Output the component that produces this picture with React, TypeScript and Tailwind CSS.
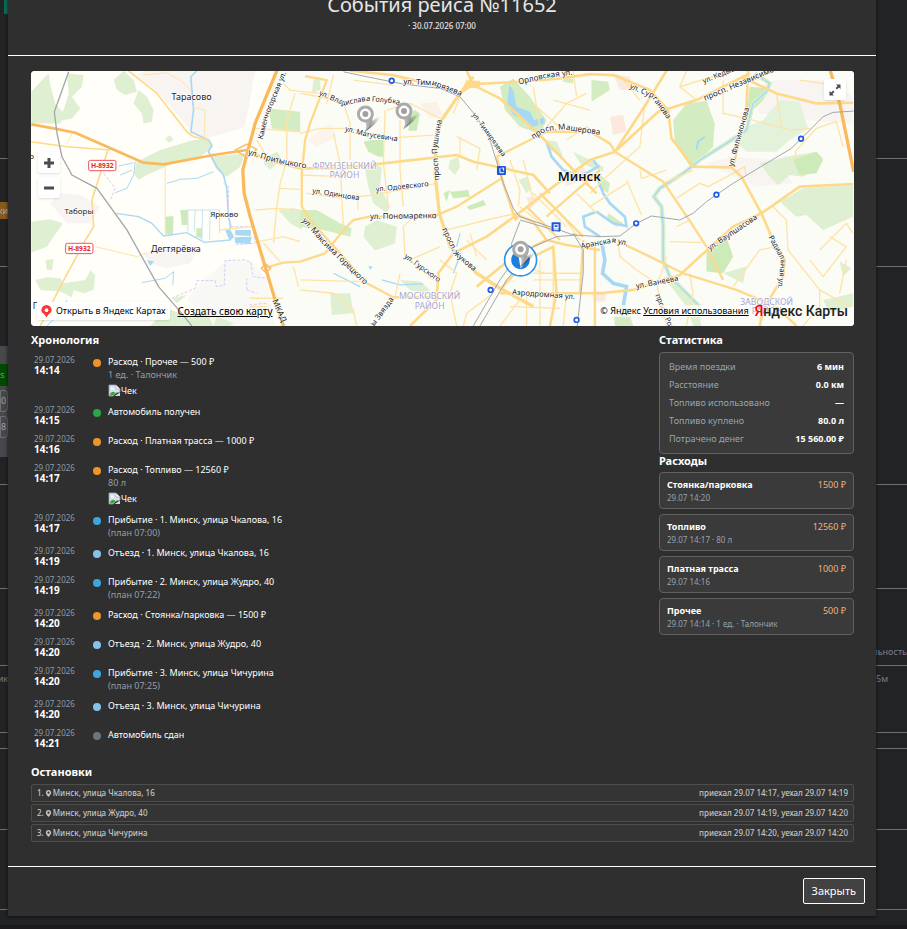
import { FaMapMarkerAlt } from "react-icons/fa";

type Kind = "expense" | "start" | "arrive" | "depart" | "end";

const DOTS: Record<Kind, string> = {
  expense: "bg-[#f0932b]",
  start: "bg-[#28a745]",
  arrive: "bg-[#3ea6dc]",
  depart: "bg-[#85c1e9]",
  end: "bg-[#6c757d]",
};

const EVENTS: { time: string; kind: Kind; text: string; sub?: string; receipt?: boolean }[] = [
  { time: "14:14", kind: "expense", text: "Расход · Прочее — 500 ₽", sub: "1 ед. · Талончик", receipt: true },
  { time: "14:15", kind: "start", text: "Автомобиль получен" },
  { time: "14:16", kind: "expense", text: "Расход · Платная трасса — 1000 ₽" },
  { time: "14:17", kind: "expense", text: "Расход · Топливо — 12560 ₽", sub: "80 л", receipt: true },
  { time: "14:17", kind: "arrive", text: "Прибытие · 1. Минск, улица Чкалова, 16", sub: "(план 07:00)" },
  { time: "14:19", kind: "depart", text: "Отъезд · 1. Минск, улица Чкалова, 16" },
  { time: "14:19", kind: "arrive", text: "Прибытие · 2. Минск, улица Жудро, 40", sub: "(план 07:22)" },
  { time: "14:20", kind: "expense", text: "Расход · Стоянка/парковка — 1500 ₽" },
  { time: "14:20", kind: "depart", text: "Отъезд · 2. Минск, улица Жудро, 40" },
  { time: "14:20", kind: "arrive", text: "Прибытие · 3. Минск, улица Чичурина", sub: "(план 07:25)" },
  { time: "14:20", kind: "depart", text: "Отъезд · 3. Минск, улица Чичурина" },
  { time: "14:21", kind: "end", text: "Автомобиль сдан" },
];

const STATS = [
  ["Время поездки", "6 мин"],
  ["Расстояние", "0.0 км"],
  ["Топливо использовано", "—"],
  ["Топливо куплено", "80.0 л"],
  ["Потрачено денег", "15 560.00 ₽"],
];

const EXPENSES = [
  { name: "Стоянка/парковка", sum: "1500 ₽", note: "29.07 14:20" },
  { name: "Топливо", sum: "12560 ₽", note: "29.07 14:17 · 80 л" },
  { name: "Платная трасса", sum: "1000 ₽", note: "29.07 14:16" },
  { name: "Прочее", sum: "500 ₽", note: "29.07 14:14 · 1 ед. · Талончик" },
];

const STOPS = [
  { address: "Минск, улица Чкалова, 16", visit: "приехал 29.07 14:17, уехал 29.07 14:19" },
  { address: "Минск, улица Жудро, 40", visit: "приехал 29.07 14:19, уехал 29.07 14:20" },
  { address: "Минск, улица Чичурина", visit: "приехал 29.07 14:20, уехал 29.07 14:20" },
];

// street names that follow the roads: text, path, size
const STREETS: [string, string, number][] = [
  ["Каменногорская ул.", "M788 238L802 175L850 58L870 10", 22],
  ["ул. Притыцкого", "M743 283L820 306L960 334", 24],
  ["МКАД", "M816 722L870 850", 25],
  ["ул. Владислава Голубка", "M956 104L1030 136L1100 122L1180 130L1260 150", 22],
  ["ул. Тимирязева", "M1210 72L1300 76L1420 122", 24],
  ["ул. Матусевича", "M1034 212L1100 230L1230 250", 22],
  ["просп. Пушкина", "M1318 360L1311 260L1335 130", 23],
  ["ул. Тимирязева", "M1416 164L1460 225L1550 350", 21],
  ["Орловская ул.", "M1557 73L1640 54L1780 36", 24],
  ["просп. Машерова", "M1601 238L1635 215L1690 208L1850 232", 24],
  ["ул. Одоевского", "M1128 395L1320 375", 22],
  ["ул. Одинцова", "M936 399L1120 428", 22],
  ["ул. Пономаренко", "M1110 477L1350 474", 24],
  ["просп. Жукова", "M1326 508L1362 585L1470 675", 23],
  ["ул. Максима Горецкого", "M906 482L970 555L1140 720", 24],
  ["ул. Гурского", "M1212 592L1360 700", 22],
  ["Аэродромная ул.", "M1536 704L1780 722", 23],
  ["ы Звязда", "M1122 800L1210 680", 23],
  ["Аранская ул.", "M1744 566L1840 548L1940 570", 23],
  ["ул. Сурганова", "M1888 84L1955 112L2008 185L2030 240", 23],
  ["ул. Кедышко", "M2112 70L2260 10", 22],
  ["просп. Независимости", "M2116 122L2380 10", 24],
  ["ул. Филимонова", "M2200 320L2224 230L2262 100", 23],
  ["ул. Ваупшасова", "M2130 572L2320 444", 23],
  ["Радиальная ул.", "M2306 532L2344 600L2330 720", 22],
  ["ул. Ванеева", "M1910 686L2100 650", 23],
  ["просп. Рокоссовского", "M1966 706L2030 860", 22],
];

const PLACES: [string, number, number, number, string][] = [
  ["Тарасово", 574, 120, 27, "#222222"],
  ["Таборы", 236, 462, 24, "#222222"],
  ["Ярково", 672, 471, 24, "#222222"],
  ["Дегтярёвка", 527, 575, 27, "#222222"],
  ["о", 94, 297, 24, "#222222"],
  ["Г", 104, 747, 26, "#222222"],
  ["ФРУНЗЕНСКИЙ", 1033, 326, 26, "#a7a3cb"],
  ["РАЙОН", 1033, 354, 26, "#a7a3cb"],
  ["МОСКОВСКИЙ", 1289, 718, 26, "#a7a3cb"],
  ["РАЙОН", 1289, 746, 26, "#a7a3cb"],
  ["ЗАВОДСКОЙ", 2301, 735, 26, "#a7a3cb"],
  ["РАЙОН", 2301, 763, 26, "#a7a3cb"],
];

const STATIONS = [
  [1175, 62], [1472, 690], [1730, 780], [1909, 490], [2150, 404], [2404, 236],
];

const PINS = [
  [1096, 162], [1212, 153], [1562, 568],
];

function MapDrawing() {
  return (
    <svg
      className="block h-full w-full font-['Noto_Sans','Open_Sans',sans-serif]"
      viewBox="92 32 2471 767"
      preserveAspectRatio="xMidYMid slice"
      role="img"
      aria-label="Карта"
    >
      <defs>
        <linearGradient id="pin-shadow" x1="0" y1="1" x2="1" y2="0">
          <stop offset="0" stopColor="#222222" stopOpacity=".75" />
          <stop offset="1" stopColor="#222222" stopOpacity="0" />
        </linearGradient>
        <linearGradient id="pin-tail" x1="0" y1="0" x2="1" y2="0">
          <stop offset="0" stopColor="#c4c4c4" />
          <stop offset="1" stopColor="#9a9a9a" />
        </linearGradient>
        {STREETS.map(([, d], i) => (
          <path key={i} id={`street-${i}`} d={d} />
        ))}
      </defs>

      <rect x="0" y="0" width="2700" height="850" fill="#fffef8" />
      <path d="M830 32H2570V799H850L795 620L730 400L745 265Z" fill="#fcfcf6" />
      {/* built-up areas */}
      <g fill="#f8f4f1">
        <path d="M430 32H765L735 200L620 235L575 215L480 105L410 45Z" />
        <path d="M150 430L180 400L240 405L300 440L270 490L200 490Z" />
        <path d="M430 580L520 555L590 570L570 610L500 625L450 610Z" />
        <path d="M590 680L675 605L755 605L800 660L825 798H640L560 720Z" fill="#f8f8f5" />
        <path d="M2240 90L2330 60L2490 60L2560 110V190L2420 180L2280 160Z" />
        <path d="M2120 310L2200 290L2330 300L2380 370L2270 380Z" />
      </g>
      <g fill="#fbe9e0">
        <path d="M1690 345L1750 320L1770 350L1700 378Z" />
        <path d="M1580 410L1622 415L1590 448Z" />
        <path d="M1260 130L1310 125L1330 165L1290 175Z" opacity=".6" />
        <path d="M920 240L990 190L1010 230L950 260Z" opacity=".5" />
        <path d="M1830 170L1870 165L1880 215L1840 225Z" />
        <path d="M1840 40L1890 50L1900 90L1860 90Z" />
        <path d="M1780 690L1820 700L1815 725H1780Z" />
      </g>
      {/* parks and forest */}
      <g fill="#dff0d2">
        <path d="M93 95L125 60L145 40L150 75L165 130L190 160L180 190H93Z" />
        <path d="M200 40L250 45L245 80L215 110L240 145L215 175L165 185L190 150L205 100Z" />
        <path d="M340 60L370 32L400 60L410 95L375 105L350 90Z" />
        <path d="M415 90L440 110L460 150L455 185L430 190L425 160L400 130Z" />
        <path d="M495 235L510 225L520 240L505 247Z" />
        <path d="M410 305L480 270L580 240L625 235L640 260L600 290L520 310L440 345L415 360L400 340Z" />
        <path d="M630 290L680 285L735 280L720 320L680 350L650 330Z" />
        <path d="M93 485L150 478L188 490L160 530L140 560L93 578Z" />
        <path d="M135 600L160 598L155 630L140 630Z" />
        <path d="M105 660L140 652L180 655L190 670L255 660L270 632L285 645L280 690L250 700L220 690L215 712L180 695L120 690Z" />
        <path d="M495 470L520 468L518 525L495 523ZM540 450H562V495H545ZM588 505H605V535L588 530Z" fill="#cfe9bd" />
        <path d="M500 745L560 770L620 755L640 798H450ZM515 715L560 705L530 730ZM650 770L700 790L690 798H640Z" />
        <path d="M805 145L900 155V215L815 205Z" fill="#d3ecc2" />
        <path d="M800 290L830 275L845 295L810 330L790 310ZM835 450L880 445L905 455V510L870 490Z" />
        <path d="M940 60L960 50L962 90L935 100Z" />
        <path d="M1090 245L1115 240H1150V290L1135 290L1105 275Z" fill="#cdeab9" />
        <path d="M1105 310L1145 320L1140 380L1170 440L1160 460L1120 430L1105 380L1095 330Z" />
        <path d="M1230 160L1245 150L1260 160L1250 212H1225Z" fill="#cdeab9" />
        <path d="M900 450L950 450L1020 490L1055 505L1050 530L970 510L900 500Z" fill="#d3ecc2" />
        <path d="M1095 500L1130 480L1190 500L1185 550L1125 572L1090 530Z" />
        <path d="M1330 400L1350 390L1340 425ZM1350 395L1405 390L1410 410L1360 415ZM1400 440L1450 420L1458 435L1410 450Z" fill="#cdeab9" />
        <path d="M1350 300L1375 290L1380 320L1365 345L1345 325ZM1555 360L1580 350L1595 385L1580 400Z" />
        <path d="M1500 80L1540 55L1590 110L1640 180L1620 222L1560 200L1515 150Z" fill="#d3ecc2" />
        <path d="M1640 240L1670 245L1690 290L1650 270ZM1720 275L1770 300L1810 320V335L1740 310Z" />
        <path d="M1690 55H1720V70L1690 65ZM1775 60L1825 65L1830 90L1775 125Z" fill="#d3ecc2" />
        <path d="M1200 660L1260 665L1290 690L1270 700L1230 690ZM990 700L1050 700L1060 760L995 765Z" />
        <path d="M2020 180L2060 130L2120 122L2145 190L2140 260L2090 310L2070 318L2025 250Z" fill="#d3ecc2" />
        <path d="M2240 200L2290 180L2340 120L2400 125L2425 205L2370 240L2330 275L2240 275L2215 250Z" fill="#e3f2da" />
        <path d="M2250 80L2310 85L2290 120L2260 150L2250 190L2240 180Z" fill="#cdeab9" />
        <path d="M2280 310L2360 290L2450 275L2470 295L2450 330L2410 350L2370 345L2335 375L2310 350Z" />
        <path d="M2380 300L2450 275L2470 300L2450 340L2400 345Z" fill="#cdeab9" />
        <path d="M2340 425L2410 385L2560 375V470L2470 510L2420 465L2390 470Z" />
        <path d="M2120 560L2180 530L2200 590L2170 640L2120 635Z" fill="#cdeab9" />
        <path d="M2170 640L2240 620L2230 670ZM2520 605L2555 625L2530 650ZM2470 720L2560 700V740L2490 760Z" />
        <path d="M1825 460L1870 490L1850 500L1820 480ZM1795 340L1830 370L1825 400L1795 380ZM1840 740L1880 735L1900 798H1845Z" fill="#d3ecc2" />
        <path d="M1990 650L2030 660L2090 730L2105 798H2080L2060 740Z" />
      </g>
      {/* water */}
      <path
        d="M2265 40L2310 70L2300 95L2260 130L2240 210L2180 250L2100 300L2050 340L1980 385L1962 410L1985 440L1990 500V600L2010 650L2100 740"
        fill="none" stroke="#d9efcc" strokeWidth="13"
      />
      <g fill="none" stroke="#a8d9f4" strokeWidth="4">
        <path d="M590 32L572 50L580 150L572 215L625 240L635 255L625 275L650 320L670 345L680 385L685 470L692 500L680 515L690 540" strokeWidth="5" />
        <path d="M348 460L415 470L455 490L490 528L560 518L612 547L690 540" strokeWidth="4" />
        <path d="M500 370L540 358L590 355L640 335M405 305L400 345L380 385L345 398M355 318L400 308M360 345L395 330M425 668L495 655L520 635L518 675M200 720L180 760L140 798" strokeWidth="3" />
        <path d="M563 450H658V520M563 450V515M585 450L582 515M607 450L605 540M630 450L628 540" strokeWidth="2" />
        <path d="M2265 40L2310 70L2300 95L2260 130L2240 210L2180 250L2100 300L2050 340L1980 385L1962 410L1985 440L1990 500V600L2010 650L2100 740" strokeWidth="4" />
        <path d="M2090 270L2095 245L2115 230" strokeWidth="6" />
        <path d="M1640 245L1655 290L1690 330L1740 350L1795 320L1780 300M1790 455L1750 470L1755 500L1800 530M1790 455L1840 490L1880 498L1875 470L1830 430L1810 400L1790 345" strokeWidth="8" />
        <path d="M1805 545L1815 600L1808 640L1840 670L1880 680L1870 740" strokeWidth="11" />
        <path d="M1375 600L1360 640M1145 660L1200 675L1270 672M1380 520L1370 560M1000 640L1080 680" />
      </g>
      <g fill="#a8d9f4">
        <path d="M705 510H752V528L705 526ZM703 532L755 530L750 552L705 550ZM675 510L690 508L702 530L690 542Z" />
        <path d="M1528 75L1540 90L1550 140L1590 155L1602 180L1632 172L1635 190L1590 202L1570 180L1540 165L1522 130Z" />
        <path d="M440 600L462 605L450 618ZM1105 618L1118 620L1110 630Z" />
      </g>
      {/* district limits */}
      <path
        d="M310 340L345 385L330 420M515 715L585 685L590 662H645L648 680L672 676L675 602L735 600L752 608L758 650L800 655M740 690L770 700M740 690V655M670 370L685 380V470L690 500H760L765 550L700 555M748 735L800 730"
        fill="none" stroke="#d8cdf2" strokeWidth="3" strokeDasharray="9 5"
      />
      {/* side streets */}
      <g fill="none" stroke="#ffe3a6" strokeWidth="4">
        <path d="M430 45L500 38L540 60L572 90M575 140L615 150L612 235M215 220L200 250M495 315V525M285 560L410 590L440 578" strokeWidth="3" />
        <path d="M760 205L900 215M850 70L870 90L1000 105M885 100L860 180V300L840 370L830 440L820 550M835 385L900 388M765 450L830 445L900 450M775 545L850 530L900 545M790 550L840 605M880 620L895 680M748 715H850M748 740H800M770 240L800 290M660 510L755 500" />
        <path d="M900 100L960 110L1030 130L1050 190V300M900 220L960 205L1050 205L1150 235L1300 225M1200 180V330L1210 440M1155 150L1150 310L1165 440M1160 150L1230 130L1310 170L1330 180M1000 220L1020 310L1030 500M1070 400L1075 450M920 400L1030 415L1120 405L1310 370M900 345L1030 350M1240 470L1210 500L1215 590L1300 660" />
        <path d="M1340 510L1380 500L1460 480L1550 460M1230 600L1320 560M1370 230L1440 265L1430 330M1380 285V230M1530 300L1560 390L1555 440M900 660L1090 665M1185 710L1200 640M900 690L1000 700L1060 750L1070 798M1320 600L1370 640L1350 700L1370 798M1600 80L1620 200M1660 120L1770 150M1720 32L1730 110" />
        <path d="M1360 160L1400 60M1000 45L980 130M1060 60L1180 75M1560 620L1640 640M1580 700V798M1620 600V798M1660 570V760M1700 700L1690 798M1530 740L1680 745M1500 798L1560 720M1600 660H1740M1600 640L1750 640M1410 520L1430 590M1460 600L1400 540M1480 700L1400 760L1390 798" />
        <path d="M1870 60L1920 120M2060 32L2040 80L2090 120M2040 80L2170 40M2170 60V160L2240 175L2370 210L2430 205M2030 415L2100 370L2125 380L2200 340L2235 320L2238 350M1990 370L2080 330M2030 500L2070 480M1920 330L1925 355L2000 330M1880 360L1925 465M1770 440L1880 370M1770 400L1820 350L1920 260L1935 130" />
        <path d="M1855 545L1860 590L1910 630L1970 670L2000 798M1970 670L1985 640L2000 590M2010 545L2105 548M2200 680L2280 570L2330 560M2320 440L2360 480L2365 570L2460 690L2550 740M2460 570L2540 490L2560 520M2430 600L2470 650L2540 560L2490 530M2380 310L2390 270L2450 205L2510 185L2530 260M2330 100L2345 200M2070 640L2080 700L2060 798M2460 690V740L2410 798M2540 600L2520 700M2400 60L2540 80" />
        <path d="M1600 130L1700 220M1640 200L1700 130L1760 100M1570 300L1600 420M1700 240L1760 200L1840 260M1690 470L1740 540M1600 400L1700 500M1560 440L1660 520M1730 400L1790 460" />
      </g>
      {/* main streets */}
      <g fill="none" stroke="#ffd98a" strokeWidth="8" strokeLinejoin="round">
        <path d="M385 32L470 100L560 215L580 230L625 240M93 245L200 260L330 270M322 272L275 420L280 500L250 550L180 680L140 760L120 798" strokeWidth="5" />
        <path d="M745 275L820 305L900 325L1030 325L1150 310L1370 285L1420 305L1490 320L1600 345L1650 400" />
        <path d="M800 622L850 608L900 605L975 580L1030 510L1060 480L1110 470H1300L1370 440L1505 355" strokeWidth="7" />
        <path d="M915 48L980 60L930 190L915 240L905 340V440L930 480L1100 670L1180 712H1300" strokeWidth="7" />
        <path d="M1420 50L1380 100L1325 180L1308 230L1305 340L1318 460L1350 560L1430 640L1500 685L1600 740" strokeWidth="10" />
        <path d="M1050 32L1180 45L1300 75L1380 100L1420 72L1560 65L1680 55L1770 42L1840 45L1950 90L2005 150L2015 235L2080 320L2195 322L2225 350L2285 460L2315 530L2355 600L2350 650L2290 750L2280 798" />
        <path d="M1400 32L1420 75L1500 115L1620 225L1730 340L1790 400" />
        <path d="M1490 290L1590 240L1640 215L1700 215L1770 215L1830 250L1845 275L1990 365L2075 490L2120 560L2170 660" strokeWidth="7" />
        <path d="M1230 798L1310 720L1315 640L1360 580L1460 530L1550 465L1660 380L1770 300L1845 275L1975 155L2090 120L2250 40M2000 32L1940 130L1845 275" />
        <path d="M1490 290L1510 370L1540 460L1600 485L1640 540L1700 555L1800 570M1430 680L1540 590L1640 540M1500 690L1580 600L1660 560L1670 700L1650 798M1500 700H1800L1900 690L2040 645L2100 590L2200 500L2285 460L2400 380L2560 372" />
        <path d="M1785 560V798M1750 540L1740 700M1580 440L1680 540M1620 400L1750 530M1640 470L1800 330M1855 545L1950 590L2050 640L2210 690L2330 740L2390 798" strokeWidth="7" />
        <path d="M2225 50L2330 100L2450 130L2560 128M2245 32L2240 150L2200 320" />
      </g>
      <path d="M1400 62H1440V84H1400ZM1532 450L1560 470L1545 485Z" fill="#ffd98a" />
      {/* ring road */}
      <g fill="none" stroke="#fab95c" strokeWidth="10" strokeLinejoin="round">
        <path d="M93 193L160 205L225 218L430 308L490 313L640 285L740 270" strokeWidth="8" />
        <path d="M830 32L765 190L745 265L728 330L732 400L750 470L795 620L825 720L850 798" />
        <path d="M2492 32L2520 130L2562 335" />
        <path d="M705 270L740 252L770 268L740 292ZM783 625L797 612L812 625L797 638Z" strokeWidth="4" />
      </g>
      {/* railways */}
      <g fill="none" stroke="#a4a6ad" strokeWidth="3">
        <path d="M205 35L162 155L170 220L185 290L215 345L290 385L380 510L475 680L540 755L575 798" strokeWidth="4" />
        <path d="M1030 35L1100 50L1210 72L1320 85L1380 110L1430 170L1470 240L1510 370L1540 445L1560 470L1650 500L1720 525L1800 530L1860 528L1910 490L1955 468L2040 480L2080 460L2120 425L2200 370L2375 265L2470 170L2500 157L2562 153" />
        <path d="M1560 485L1535 550L1540 600M1720 520L1750 570V640L1732 798M1550 590L1500 660L1420 798M1580 590L1520 660L1440 798M1730 525L1670 530L1600 560L1550 600M1560 480L1680 515" />
      </g>

      <g fill="#222222" stroke="#ffffff" strokeWidth="4" strokeLinejoin="round" paintOrder="stroke">
        {STREETS.map(([name, , size], i) => (
          <text key={i} fontSize={size}>
            <textPath href={`#street-${i}`}>{name}</textPath>
          </text>
        ))}
        {PLACES.map(([name, x, y, size, fill], i) => (
          <text key={i} x={x} y={y} fontSize={size} fill={fill} textAnchor="middle">
            {name}
          </text>
        ))}
        <text x="1738" y="364" fontSize="39" fontWeight="600" fill="#111111" textAnchor="middle">
          Минск
        </text>
      </g>

      {[[265, 301], [196, 550]].map(([x, y]) => (
        <g key={x}>
          <rect x={x} y={y} width="82" height="31" rx="5" fill="#ffffff" stroke="#f0525f" strokeWidth="3" />
          <text x={x + 41} y={y + 23} fontSize="20" fontWeight="700" fill="#e31e2e" textAnchor="middle">
            Н-8932
          </text>
        </g>
      ))}

      {STATIONS.map(([x, y]) => (
        <circle key={x} cx={x} cy={y} r="7" fill="#ffffff" stroke="#1f5ae8" strokeWidth="5" />
      ))}
      <g>
        <rect x="1491" y="318" width="27" height="27" rx="3" fill="#1f56d8" />
        <path d="M1500 324V338H1512M1505 324H1511V332" fill="none" stroke="#ffffff" strokeWidth="3" />
        <rect x="1655" y="487" width="27" height="27" rx="3" fill="#1f56d8" />
        <path d="M1661 493H1676V506H1661ZM1661 508H1676V511H1661Z" fill="#ffffff" />
        <rect x="1664" y="496" width="9" height="5" fill="#1f56d8" />
      </g>

      <circle cx="1562" cy="600" r="48" fill="#ffffff" stroke="#2f93e6" strokeWidth="5" />
      <path d="M1540 582A28 28 0 1 0 1588 590L1562 626L1556 590Z" fill="#1d7fdc" />
      {PINS.map(([x, y]) => (
        <g key={x}>
          <path d={`M${x - 2} ${y + 54}L${x + 14} ${y + 24}L${x + 44} ${y + 6}Q${x + 38} ${y + 28} ${x - 2} ${y + 54}Z`} fill="url(#pin-shadow)" />
          <path
            d={`M${x - 4} ${y + 56}Q${x + 8} ${y + 40} ${x} ${y + 22}L${x + 22} ${y + 10}Q${x + 20} ${y + 32} ${x - 4} ${y + 56}Z`}
            fill="url(#pin-tail)"
          />
          <circle cx={x} cy={y} r="21" fill="#ffffff" stroke="#ababab" strokeWidth="9" />
          <circle cx={x} cy={y} r="9" fill="#a0a0a0" />
        </g>
      ))}
    </svg>
  );
}

function TripMap() {
  return (
    <div className="relative h-[255px] overflow-hidden rounded-[4px] bg-[#fffef8] font-['Noto_Sans','Open_Sans',sans-serif] text-black">
      <MapDrawing />
      <div className="absolute left-[7px] top-[81px] flex flex-col gap-1">
        <button type="button" aria-label="Приблизить" className="flex h-[21px] w-[22px] items-center justify-center rounded-[2px] bg-white shadow">
          <svg viewBox="0 0 12 12" className="size-3">
            <path d="M6 1v10M1 6h10" stroke="#4d4d4d" strokeWidth="3" />
          </svg>
        </button>
        <button type="button" aria-label="Отдалить" className="flex h-[21px] w-[22px] items-center justify-center rounded-[2px] bg-white shadow">
          <svg viewBox="0 0 12 12" className="size-3">
            <path d="M1 6h10" stroke="#4d4d4d" strokeWidth="3" />
          </svg>
        </button>
      </div>
      <button type="button" aria-label="На весь экран" className="absolute right-2 top-2 flex h-[21px] w-[22px] items-center justify-center rounded-[2px] bg-white shadow">
        <svg viewBox="0 0 12 12" className="size-3" fill="#4d4d4d">
          <path d="M7 .5h4.500V5L9.900 3.400 7.900 5.400 6.600 4.100 8.600 2.100ZM.5 11.500V7l1.600 1.600 2-2 1.300 1.300-2 2L5 11.500Z" />
        </svg>
      </button>

      <div className="absolute inset-x-1.5 bottom-1.5 flex items-center text-[9px] leading-[18px]">
        <a href="#open-map" className="flex items-center gap-1 rounded-[2px] bg-white px-1 shadow">
          <svg viewBox="0 0 12 14" className="h-3 w-[11px]">
            <path d="M6 0a6 6 0 0 1 6 6c0 3.500-4 4-5.300 7.500a.7.700 0 0 1-1.400 0C4 10 0 9.500 0 6a6 6 0 0 1 6-6Z" fill="#f33" />
            <circle cx="6" cy="6" r="2.200" fill="#ffffff" />
          </svg>
          Открыть в Яндекс Картах
        </a>
        <a href="#create-map" className="ml-2 text-[10px] underline">Создать свою карту</a>
        <span className="ml-auto bg-white/70 px-[2px] leading-3">
          © Яндекс <a href="#terms" className="underline">Условия использования</a>
        </span>
        <span className="ml-1 font-['Roboto',sans-serif] text-sm font-medium leading-[18px] text-[#222222]">
          <span className="text-[#f00]">Я</span>ндекс Карты
        </span>
      </div>
    </div>
  );
}

function Receipt() {
  return (
    <a href="#receipt" className="mt-1 flex h-[13px] items-center text-[9px] text-white">
      <svg viewBox="0 0 13 13" className="size-[13px]" role="img" aria-label="Чек">
        <path d="M1 1h7l4 4v3L8 9l-3 3H1Z" fill="#d5e2f5" stroke="#9aa3ad" strokeWidth=".8" />
        <path d="M8 1v4h4Z" fill="#ffffff" stroke="#9aa3ad" strokeWidth=".6" />
        <path d="M1.500 11.500c1-4 4-5 6-2.500l-2.500 2.500Z" fill="#3fa535" />
        <path d="M3 4.500c0-1 2-1.300 2.400-.3 1 0 1.100 1.300 0 1.300H3.600c-.8 0-.9-.8-.6-1Z" fill="#ffffff" />
        <path d="M12 8.500V12H6.500Z" fill="#d5dae0" />
      </svg>
      Чек
    </a>
  );
}

// page that stays behind the dialog
function Backdrop() {
  return (
    <div aria-hidden="true" className="absolute inset-0 flex flex-col overflow-hidden bg-[#212325] text-[9px] leading-3 text-[#7d8084]">
      <div className="h-[159px] border-b border-[#6e7173]">
        <div className="ml-1 h-[14px] w-1 bg-[#05705a]" />
      </div>
      <div className="h-[108px] border-b border-[#6e7173] pt-[43px]">
        <div className="flex h-[17px] w-2 items-center justify-end overflow-hidden bg-[#8a5a1c] text-[#a9a9a9]">ки</div>
      </div>
      <div className="h-[218px] border-b border-[#6e7173] pt-[79px]">
        <div className="flex h-[111px] w-2 flex-col gap-1 overflow-hidden bg-[#46484b] pt-[18px] text-[#a0a0a0]">
          <div className="h-[22px] bg-[#004a00] pt-[5px] text-[#b08040]">s</div>
          <div className="h-[22px] rounded-r border border-[#6e7173] pt-1">0</div>
          <div className="h-[22px] rounded-r border border-[#6e7173] pt-1">8</div>
        </div>
      </div>
      <div className="h-[104px] border-b border-[#6e7173]" />
      <div className="flex h-[77px] items-end justify-end border-b border-[#6e7173] pb-[7px]">льность</div>
      <div className="flex h-[67px] justify-between border-b border-[#6e7173] pt-[7px]">
        <span className="flex w-2 justify-end overflow-hidden">ик</span>
        <span className="w-[31px]">5м</span>
      </div>
      <div className="h-4 border-b border-[#6e7173]" />
      <div className="h-[81px] border-b border-[#6e7173]" />
      <div className="h-[80px] border-b border-[#6e7173]" />
      <div className="mt-[15px] flex-1 bg-[#1c1a1d]" />
    </div>
  );
}

const heading = "text-[11px] font-bold leading-[14px] text-white";

export default function App() {
  return (
    <div className="relative min-h-screen overflow-hidden font-['Noto_Sans','Open_Sans',sans-serif] text-white">
      <Backdrop />
      <div
        role="dialog"
        aria-labelledby="trip-title"
        className="relative -mt-4 mb-[13px] ml-2 mr-[31px] bg-[#2f2f2f] shadow-[0_1px_3px_#111111]"
      >
        <header className="border-b border-white pb-[23px] pt-2 text-center">
          <h1 id="trip-title" className="text-xl leading-[26px] text-[#e6e6e6]">События рейса №11652</h1>
          <p className="mt-[2px] text-[8px] font-medium leading-3 text-[#e6e6e6]">· 30.07.2026 07:00</p>
        </header>

        <main className="pb-6 pl-[23px] pr-[22px] pt-[15px]">
          <TripMap />

          <div className="mt-[7px] flex gap-5">
            <section className="min-w-0 flex-1">
              <h2 className={`mb-1 ${heading}`}>Хронология</h2>
              <ul>
                {EVENTS.map((e, i) => (
                  <li key={i} className="flex py-1">
                    <div className="w-[60px] pl-[3px]">
                      <div className="text-[8px] leading-[10px] text-[#8a9ba8]">29.07.2026</div>
                      <div className="text-[10px] font-bold leading-[10px]">{e.time}</div>
                    </div>
                    <span className={`ml-[2px] mt-1 size-2 shrink-0 rounded-full ${DOTS[e.kind]}`} />
                    <div className="ml-[7px] min-h-[21px] text-[9px] leading-[14px]">
                      <div>{e.text}</div>
                      {e.sub && <div className="leading-[11px] text-[#939fab]">{e.sub}</div>}
                      {e.receipt && <Receipt />}
                    </div>
                  </li>
                ))}
              </ul>
            </section>

            <aside className="w-[195px]">
              <h2 className={`mb-[5px] ${heading}`}>Статистика</h2>
              <dl className="rounded-[4px] border border-[#616161] bg-[#3a3a3a] px-[9px] py-[5px] text-[9px] leading-[18px]">
                {STATS.map(([label, value]) => (
                  <div key={label} className="flex justify-between">
                    <dt className="text-[#98a5b0]">{label}</dt>
                    <dd className="font-bold">{value}</dd>
                  </div>
                ))}
              </dl>

              <h2 className={`mb-1 ${heading}`}>Расходы</h2>
              <ul className="flex flex-col gap-[5px]">
                {EXPENSES.map((x) => (
                  <li key={x.name} className="rounded-[4px] border border-[#616161] bg-[#3a3a3a] px-[7px] pb-1 pt-[5px] text-[9px]">
                    <div className="flex justify-between leading-[14px]">
                      <span className="font-bold">{x.name}</span>
                      <span className="text-[#f0b27a]">{x.sum}</span>
                    </div>
                    <div className="text-[8px] leading-3 text-[#98a2ab]">{x.note}</div>
                  </li>
                ))}
              </ul>
            </aside>
          </div>

          <section className="mt-3">
            <h2 className={`mb-[5px] ${heading}`}>Остановки</h2>
            <ol className="flex flex-col gap-[2px]">
              {STOPS.map((s, i) => (
                <li key={s.address} className="flex justify-between rounded-[2px] border border-[#4d4d4d] bg-[#343434] px-[5px] text-[8px] font-medium leading-4 text-[#c4c4c4]">
                  <span className="flex items-center gap-px">
                    {i + 1}.
                    <FaMapMarkerAlt className="size-[7px]" />
                    {s.address}
                  </span>
                  <span>{s.visit}</span>
                </li>
              ))}
            </ol>
          </section>
        </main>

        <footer className="flex justify-end border-t border-white pb-3 pl-3 pr-[11px] pt-[11px]">
          <button type="button" className="h-[26px] rounded-[2px] border border-white bg-[#424242] px-2 text-[11px] leading-6">
            Закрыть
          </button>
        </footer>
      </div>
    </div>
  );
}
